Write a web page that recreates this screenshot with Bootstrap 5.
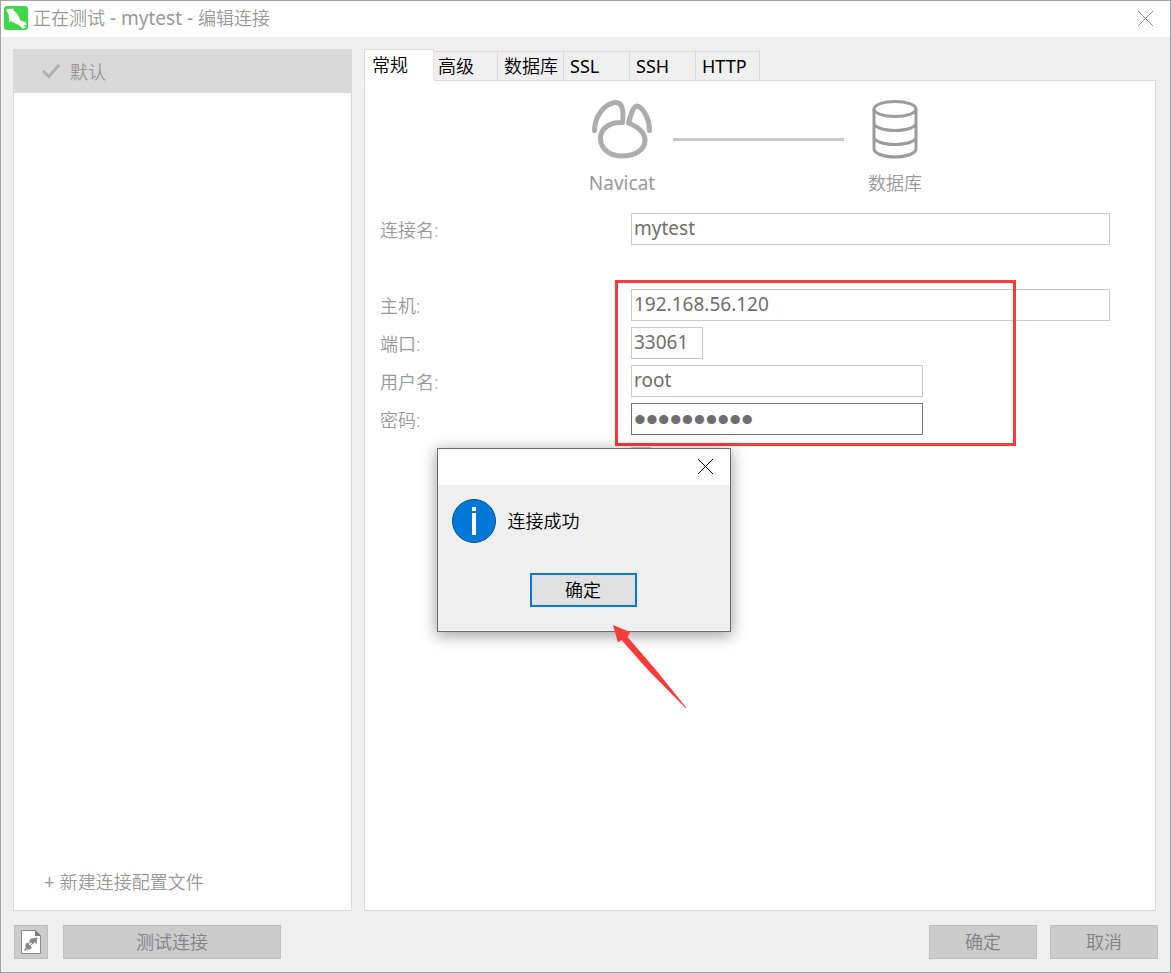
<!DOCTYPE html>
<html lang="zh-CN">
<head>
<meta charset="utf-8">
<meta name="viewport" content="width=device-width, initial-scale=1">
<title>正在测试 - mytest - 编辑连接</title>
<link href="https://cdn.jsdelivr.net/npm/bootstrap@5.3.0/dist/css/bootstrap.min.css" rel="stylesheet">
<style>
  :root { --face: #efefef; --line: #d9d9d9; --muted: #989898; }
  body { font-family: "Noto Sans", "Noto Sans CJK SC", sans-serif; font-size: 18px; font-weight: 350; line-height: 24px; color: #000; background: var(--face); }
  button { font-weight: inherit; }
  .latin { font-size: 19px; font-weight: 400; }
  .app-window { border: 1px solid #a3a3a3; min-height: 100vh; }
  .title-bar { height: 36px; padding: 0 16px 2px 3px; color: var(--muted); }
  .title-bar .win-title { margin-left: 5px; }
  .plain-btn { border: 0; background: none; padding: 0; display: flex; }
  .work-area { padding: 12px 14px 0 12px; gap: 12px; }
  .profiles { width: 339px; border: 1px solid var(--line); color: var(--muted); }
  .profile-item { height: 44px; margin: -1px -1px 0; padding: 2px 0 0 28px; gap: 9px; background: var(--line); }
  .new-profile { padding: 0 0 16px 30px; color: var(--muted); text-decoration: none; }
  .tab-row { border: 0; align-items: flex-end; margin-bottom: -1px; position: relative; }
  .tab-row .nav-link { width: 66px; height: 30px; padding: 0 0 0 6px; margin: 0; border: 1px solid var(--line); border-left: 0; border-radius: 0; text-align: left; color: #000; background: var(--face); line-height: 28px; white-space: nowrap; }
  .tab-row .tab-first { width: 64px; padding-left: 4px; }
  .tab-row .tab-last { width: 64px; }
  .tab-row .tab-latin { font-weight: 400; }
  .tab-row .nav-link.active { width: 70px; height: 32px; padding-left: 7px; border-left: 1px solid var(--line); border-bottom-color: #fff; background: #fff; color: #000; }
  .tab-body { border: 1px solid var(--line); padding: 18px 45px 0 15px; }
  .route { color: var(--muted); gap: 18px; margin-right: -27px; }
  .route-node { width: 66px; gap: 11px; }
  .route-line { width: 171px; height: 3px; margin-top: 39px; background: #c8c8c8; }
  .fields { margin-top: 18px; }
  .field-row { height: 32px; margin-bottom: 6px; }
  .field-row label { width: 251px; flex: none; color: var(--muted); padding-top: 5px; }
  .form-control { height: 32px; padding: 0 2px 2px; border: 1px solid #c9c9c9; border-radius: 0; color: #6e6e6e; font-size: 19px; font-weight: 400; line-height: 28px; }
  .w-user { width: 292px; }
  .w-port { width: 72px; }
  .form-control.pwd { border-color: #767676; padding-bottom: 0; font-family: "Liberation Sans", sans-serif; font-size: 34px; }
  .name-row { margin-bottom: 44px; }
  .highlight { position: absolute; left: 235px; top: -9px; width: 401px; height: 166px; border: 3px solid #fb3a3a; pointer-events: none; }
  .form-check-input.save-check { width: 20px; height: 20px; margin: 12px 0 0 251px; border-radius: 0; border-color: #c9c9c9; }
  .bottom-bar { padding: 14px 12px 13px 13px; }
  .flat-btn { height: 34px; padding: 0; border: 1px solid #bfbfbf; border-radius: 0; background: #ccc; color: #838383; font-size: 18px; line-height: 32px; }
  .flat-btn.icon-only { width: 34px; margin-right: 15px; }
  .flat-btn.wide { width: 218px; }
  .flat-btn.std { width: 108px; }
  .bottom-actions { gap: 13px; }
  .msg-box { position: absolute; left: calc(50% - 149px); top: calc(50% - 39px); width: 294px; height: 184px; border: 1px solid #6b6b6b; background: var(--face); box-shadow: 0 3px 14px 1px rgba(0,0,0,.36); }
  .msg-head { height: 36px; padding-right: 16px; background: #fff; }
  .msg-body { padding: 14px 14px 0; gap: 12px; }
  .ok-btn { width: 107px; height: 34px; margin: 30px 0 0 92px; padding: 0; border: 2px solid #0078d7; background: #e1e1e1; color: #000; line-height: 30px; }
  .pointer-arrow { position: absolute; left: 174px; top: 175px; pointer-events: none; }
</style>
</head>
<body>
<main class="app-window d-flex flex-column position-relative">
  <header class="title-bar d-flex align-items-center bg-white">
    <svg width="24" height="24" viewBox="0 0 24 24" aria-hidden="true"><rect width="24" height="24" rx="3" fill="#41d64a"/><path fill="#fff" d="M2 3.500C4 2.600 5.500 2.600 7 3L9.300 2.400 9.200 4.300C13 6.500 15 10 16.200 14.400L21.500 16.300 22.800 19 19.600 19.300 22.300 21.800 18.500 22.700 14.800 18.700C11.500 18 8.500 16.500 7 14.500L5.800 17 4.800 12C5.200 9 4.600 7 2.600 5.200Z"/></svg>
    <span class="win-title">正在测试<span class="latin"> - mytest - </span>编辑连接</span>
    <button class="plain-btn ms-auto" type="button" aria-label="关闭窗口"><svg width="17" height="17" viewBox="0 0 17 17"><path d="M1 1l15 15M16 1L1 16" stroke="#8c8c8c"/></svg></button>
  </header>

  <div class="work-area d-flex flex-grow-1">
    <aside class="profiles d-flex flex-column flex-shrink-0 bg-white">
      <div class="profile-item d-flex align-items-center">
        <svg width="20" height="16" viewBox="0 0 20 16" aria-hidden="true"><path d="M2 7l6 5.500L18 1" fill="none" stroke="#b0b0b0" stroke-width="3"/></svg>
        <span>默认</span>
      </div>
      <a class="new-profile mt-auto" href="#"><span class="latin">+ </span>新建连接配置文件</a>
    </aside>

    <section class="d-flex flex-column flex-grow-1">
      <div class="nav nav-tabs tab-row" role="tablist">
        <button class="nav-link active" type="button" role="tab" aria-selected="true">常规</button>
        <button class="nav-link tab-first" type="button" role="tab">高级</button>
        <button class="nav-link" type="button" role="tab">数据库</button>
        <button class="nav-link tab-latin" type="button" role="tab">SSL</button>
        <button class="nav-link tab-latin" type="button" role="tab">SSH</button>
        <button class="nav-link tab-latin tab-last" type="button" role="tab">HTTP</button>
      </div>
      <div class="tab-body flex-grow-1 bg-white">
        <div class="route d-flex justify-content-center">
          <div class="route-node d-flex flex-column align-items-center">
            <svg width="64" height="61" viewBox="0 0 64 61" fill="none" stroke="#acacac" stroke-width="5" stroke-linecap="round" stroke-linejoin="round" aria-hidden="true"><path d="M4.500 31.500C4.500 19 13 5 25 3.500C32 3 34 10 32.500 23.500C20 23 10.500 29 10.500 39.500C10.500 50 20 57 32.500 57C45 57 55 50.500 55 41.500C55 33 47 27.500 38.500 24C41 15 43.500 7.500 46.500 7C52 7 59.500 19 59.500 31.500"/></svg>
            <span class="latin">Navicat</span>
          </div>
          <div class="route-line"></div>
          <div class="route-node d-flex flex-column align-items-center">
            <svg width="48" height="61" viewBox="0 0 48 61" fill="none" stroke="#9b9b9b" stroke-width="3" aria-hidden="true"><ellipse cx="24" cy="10" rx="21" ry="7.500"/><path d="M3 10V50C3 54 12 58 24 58S45 54 45 50V10M3 24C3 28 12 31.500 24 31.500S45 28 45 24M3 38C3 42 12 45.500 24 45.500S45 42 45 38"/></svg>
            <span>数据库</span>
          </div>
        </div>

        <form class="fields">
          <div class="field-row name-row d-flex"><label for="conn">连接名:</label><input class="form-control" id="conn" type="text" value="mytest"></div>
          <div class="position-relative">
            <div class="field-row d-flex"><label for="host">主机:</label><input class="form-control" id="host" type="text" value="192.168.56.120"></div>
            <div class="field-row d-flex"><label for="port">端口:</label><input class="form-control w-port" id="port" type="text" value="33061"></div>
            <div class="field-row d-flex"><label for="user">用户名:</label><input class="form-control w-user" id="user" type="text" value="root"></div>
            <div class="field-row d-flex mb-0"><label for="pwd">密码:</label><input class="form-control w-user pwd" id="pwd" type="password" value="0123456789" autocomplete="off"></div>
            <div class="highlight"></div>
          </div>
          <input class="form-check-input save-check d-block" type="checkbox" aria-label="保存密码">
        </form>
      </div>
    </section>
  </div>

  <footer class="bottom-bar d-flex">
    <button class="flat-btn icon-only d-flex align-items-center justify-content-center" type="button" aria-label="连接文件"><svg width="20" height="24" viewBox="0 0 20 24"><path d="M.5.5H14.500L19.500 5.500V23.500H.5Z" fill="#fff" stroke="#8a8a8a"/><path d="M14 0L20 6H14Z" fill="#7d7d7d"/><path d="M10 8.500L16.500 7.500 15.500 14 13.600 12.400 11.800 14.500 8 10.800ZM6 12.500L11 17.500 9 19.500H6L4 21 3 20 4.500 18V14Z" fill="#8a8a8a"/><path d="M7 14L12 11M9 16L13 12" stroke="#8a8a8a"/></svg></button>
    <button class="flat-btn wide" type="button">测试连接</button>
    <div class="bottom-actions d-flex ms-auto">
      <button class="flat-btn std" type="button">确定</button>
      <button class="flat-btn std" type="button">取消</button>
    </div>
  </footer>

  <div class="msg-box" role="dialog" aria-label="连接成功">
    <div class="msg-head d-flex align-items-center justify-content-end">
      <button class="plain-btn" type="button" aria-label="关闭"><svg width="17" height="17" viewBox="0 0 17 17"><path d="M1 1l15 15M16 1L1 16" stroke="#000"/></svg></button>
    </div>
    <div class="msg-body d-flex align-items-center">
      <svg width="44" height="44" viewBox="0 0 44 44" aria-hidden="true"><circle cx="22" cy="22" r="21.500" fill="#0078d7" stroke="#07528f"/><path d="M20 8h4v4h-4zM20 14h4v22h-4z" fill="#fff"/></svg>
      <span>连接成功</span>
    </div>
    <button class="ok-btn" type="button">确定</button>
    <svg class="pointer-arrow" width="76" height="86" viewBox="0 0 76 86" aria-hidden="true"><path d="M1 1L18 8 15.500 13L44 46 74.500 84 73.500 84 36 46 9.500 16 6 18.500Z" fill="#fb3a3a"/></svg>
  </div>
</main>
<script src="https://cdn.jsdelivr.net/npm/bootstrap@5.3.0/dist/js/bootstrap.bundle.min.js"></script>
</body>
</html>
